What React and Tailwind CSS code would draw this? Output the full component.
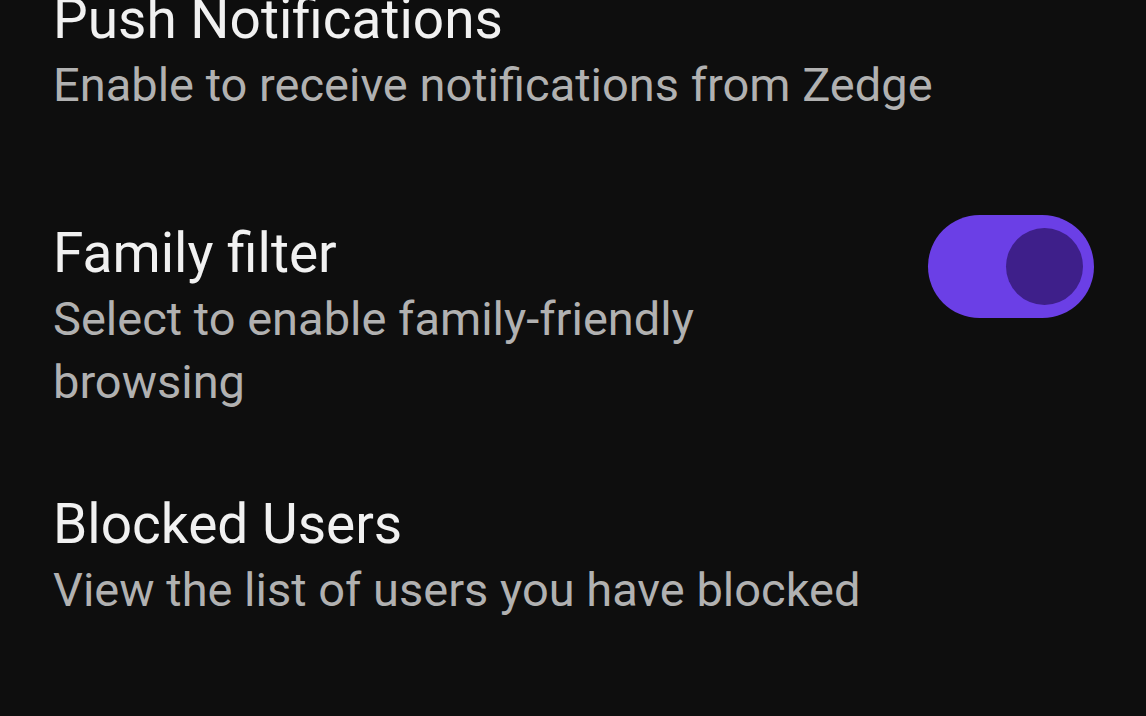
import React from "react";

function Toggle({ on }) {
  return (
    <div
      className={`-mt-1 flex h-[103px] w-[166px] shrink-0 items-center rounded-full pr-[11px] ${
        on ? "justify-end bg-[#6b3fe6]" : "justify-start bg-[#3a3a3a]"
      }`}
    >
      <div className="h-[77px] w-[77px] rounded-full bg-[#3e1f8a]" />
    </div>
  );
}

function SettingRow({ title, subtitle, toggle, className = "" }) {
  return (
    <div className={`flex items-start gap-[47px] ${className}`}>
      <div className="flex-1">
        <div className="text-[55px] leading-[68px] text-[#f1f1f1]">{title}</div>
        <div className="text-[47px] leading-[63px] text-[#b1b1b1]">{subtitle}</div>
      </div>
      {toggle !== undefined && <Toggle on={toggle} />}
    </div>
  );
}

export default function App() {
  return (
    <div
      className="h-[716px] w-full overflow-hidden bg-[#0e0e0e] pl-[53px] pr-[52px]"
      style={{ fontFamily: "Roboto, 'Noto Sans', sans-serif" }}
    >
      <SettingRow
        className="-mt-[15px]"
        title="Push Notifications"
        subtitle="Enable to receive notifications from Zedge"
      />
      <SettingRow
        className="mt-[103px]"
        title="Family filter"
        subtitle="Select to enable family-friendly browsing"
        toggle={true}
      />
      <SettingRow
        className="mt-[77px]"
        title="Blocked Users"
        subtitle="View the list of users you have blocked"
      />
    </div>
  );
}
